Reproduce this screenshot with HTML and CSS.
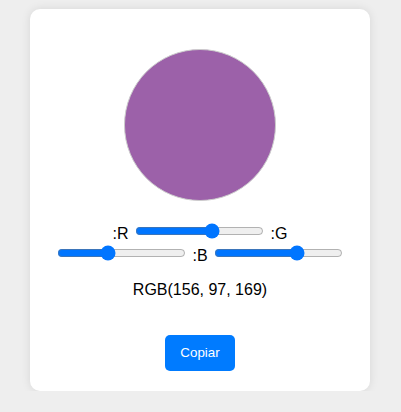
FILE: index.html
```html
<!DOCTYPE html>
<html lang="es">
<head>
<meta charset="utf-8">
<title>Selector de color</title>
<link rel="stylesheet" href="styles.css">
</head>
<body>
<div class="card">
  <div class="swatch" style="background-color: rgb(156, 97, 169);"></div>
  <div class="sliders"><label class="chan" for="r">:R</label> <input class="range" type="range" id="r" min="0" max="255" value="156"> <label class="chan" for="g">:G</label> <input class="range" type="range" id="g" min="0" max="255" value="97"> <label class="chan" for="b">:B</label> <input class="range" type="range" id="b" min="0" max="255" value="169"></div>
  <p class="value">RGB(156, 97, 169)</p>
  <button class="copy" type="button">Copiar</button>
</div>
</body>
</html>
```

FILE: styles.css
```css
html, body {
  margin: 0;
  padding: 0;
}

body {
  background: #eeeeee;
  font-family: "Liberation Sans", Arial, sans-serif;
  font-size: 16px;
  color: #000;
}

.card {
  width: 300px;
  margin: 9px 0 0 30px;
  padding: 20px;
  background: #ffffff;
  border-radius: 10px;
  box-shadow: 0 0 10px rgba(0, 0, 0, 0.1);
  text-align: center;
}

.swatch {
  width: 150px;
  height: 150px;
  margin: 20px auto;
  border: 1px solid #cccccc;
  border-radius: 50%;
}

.sliders {
  margin: 0;
}

.range {
  width: 129px;
}

.value {
  margin: 16px 0 36px;
}

.copy {
  padding: 10px 15px 11px;
  border: none;
  border-radius: 5px;
  background: #007bff;
  color: #ffffff;
  font-family: "Liberation Sans", Arial, sans-serif;
  font-size: 13.333px;
  cursor: pointer;
}
```
